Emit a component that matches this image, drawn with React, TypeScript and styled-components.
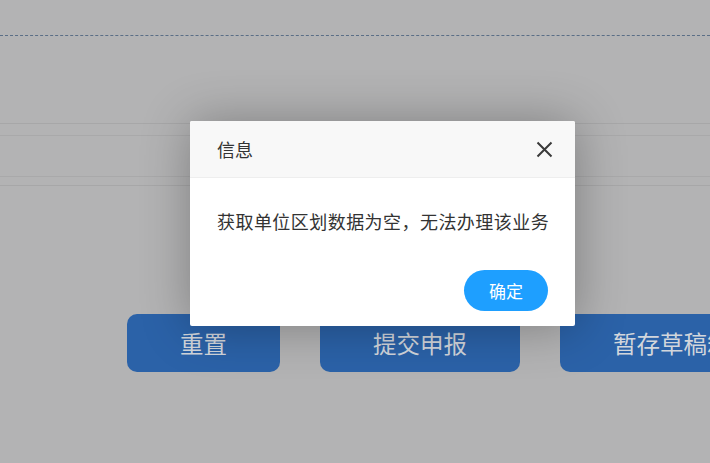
import styled, { createGlobalStyle } from "styled-components";

const GlobalStyle = createGlobalStyle`
  html, body {
    margin: 0;
    padding: 0;
    background: #b3b3b4;
    font-family: "Noto Sans CJK SC", "Noto Sans", sans-serif;
  }
`;

const Page = styled.div`
  position: relative;
  width: 100%;
  height: 463px;
  overflow: hidden;
  background: #b3b3b4;
`;

const TopBar = styled.div`
  height: 35px;
  border-bottom: 1px dashed #5a6e86;
`;

const FormRow = styled.div`
  margin-top: 87px;
  border-top: 1px solid #a7a7a8;
  border-bottom: 1px solid #a7a7a8;
  padding: 11px 0 8px;
`;

const FormRowInner = styled.div`
  height: 40px;
  border-top: 1px solid #a9a9aa;
  border-bottom: 1px solid #a9a9aa;
`;

const ButtonBar = styled.div`
  display: flex;
  gap: 40px;
  margin-top: 128px;
  padding-left: 127px;
`;

const ActionButton = styled.button`
  flex-shrink: 0;
  height: 58px;
  padding: 0 53px;
  border: none;
  border-radius: 10px;
  background: #2b62a8;
  color: #d2d6dc;
  font-family: "Noto Sans CJK SC", sans-serif;
  font-size: 23.5px;
  white-space: nowrap;
`;

const Dialog = styled.div`
  position: absolute;
  left: 190px;
  top: 121px;
  width: 385px;
  background: #fff;
  border-radius: 2px;
  box-shadow: 1px 1px 50px rgba(0, 0, 0, 0.3);
`;

const DialogHeader = styled.div`
  display: flex;
  align-items: center;
  justify-content: space-between;
  height: 56px;
  padding: 0 19px 0 27px;
  background: #f8f8f8;
  border-bottom: 1px solid #eee;
  border-radius: 2px 2px 0 0;
`;

const DialogTitle = styled.span`
  font-size: 18px;
  color: #333;
`;

const CloseButton = styled.span`
  display: flex;
  width: 24px;
  height: 24px;
  align-items: center;
  justify-content: center;
  cursor: pointer;
`;

const DialogContent = styled.div`
  padding: 27px 27px 0;
  font-size: 18px;
  line-height: 32px;
  letter-spacing: 0.45px;
  color: #333;
  white-space: nowrap;
`;

const DialogFooter = styled.div`
  display: flex;
  justify-content: flex-end;
  padding: 33px 27px 15px;
`;

const ConfirmButton = styled.button`
  width: 84px;
  height: 41px;
  border: none;
  border-radius: 21px;
  background: #1e9fff;
  color: #fff;
  font-family: "Noto Sans CJK SC", sans-serif;
  font-size: 17px;
`;

const App = () => {
  return (
    <>
      <GlobalStyle />
      <Page>
        <TopBar />
        <FormRow>
          <FormRowInner />
        </FormRow>
        <ButtonBar>
          <ActionButton>重置</ActionButton>
          <ActionButton>提交申报</ActionButton>
          <ActionButton>暂存草稿箱</ActionButton>
        </ButtonBar>

        <Dialog>
          <DialogHeader>
            <DialogTitle>信息</DialogTitle>
            <CloseButton>
              <svg width="17" height="17" viewBox="0 0 17 17">
                <path
                  d="M1.5 1.5 L15.5 15.5 M15.5 1.5 L1.5 15.5"
                  stroke="#3a3a3a"
                  strokeWidth="2"
                  fill="none"
                />
              </svg>
            </CloseButton>
          </DialogHeader>
          <DialogContent>获取单位区划数据为空，无法办理该业务</DialogContent>
          <DialogFooter>
            <ConfirmButton>确定</ConfirmButton>
          </DialogFooter>
        </Dialog>
      </Page>
    </>
  );
};

export default App;
